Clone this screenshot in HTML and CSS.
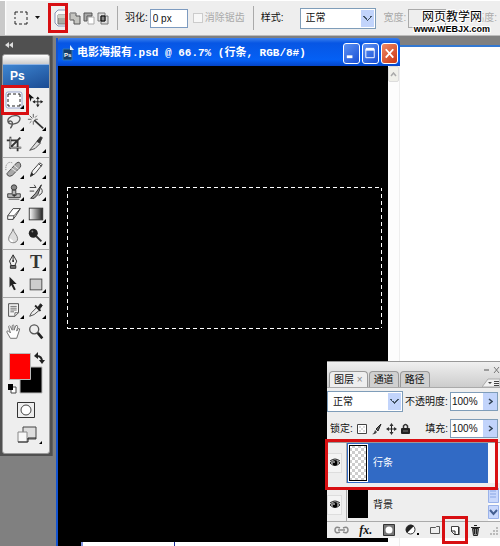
FILE: index.html
```html
<!DOCTYPE html>
<html lang="zh-CN">
<head>
<meta charset="utf-8">
<title>电影海报有.psd</title>
<link rel="stylesheet" href="styles.css">
</head>
<body>
<header class="options">
  <button class="icon-btn preset" aria-label="矩形选框工具"><svg width="14" height="14" viewBox="0 0 14 14"><path d="M1 4V1h3M6 1h3M11 1h2v3M13 6v3M13 11v2h-3M8 13H5M3 13H1v-3M1 8V6" fill="none" stroke="#222"/></svg></button>
  <button class="icon-btn drop" aria-label="预设"><svg width="5" height="4"><path d="M0 0h5L2.500 3z" fill="#111"/></svg></button>
  <div class="modes">
    <button class="icon-btn marked" aria-label="新选区"><svg width="13" height="18" viewBox="0 0 13 18"><path d="M13 1H4L1 4v10l3 3h9" fill="#fafafa" stroke="#8795b8"/><path d="M4 6h8v9H4z" fill="#a9ada5" stroke="#777"/><path d="M4 6h8v3H4z" fill="#ccd0c8"/></svg></button>
    <button class="icon-btn" aria-label="添加到选区"><svg width="12" height="13" viewBox="0 0 12 13"><path d="M1 1h6v3h4v8H5V8H1z" fill="#c4c4c0" stroke="#555"/><path d="M1 8V1h6" fill="none" stroke="#aaa"/></svg></button>
    <button class="icon-btn" aria-label="从选区减去"><svg width="12" height="13" viewBox="0 0 12 13"><path d="M5 5h6v7H5z" fill="#fff" stroke="#aaa"/><path d="M1 1h8v3H4v5H1z" fill="#aaa" stroke="#555"/></svg></button>
    <button class="icon-btn" aria-label="与选区交叉"><svg width="12" height="13" viewBox="0 0 12 13"><path d="M1 1h7v8H1zM4 4h7v8H4z" fill="#ddd" stroke="#777"/><path d="M4 4h4v5H4z" fill="#888" stroke="#000"/></svg></button>
  </div>
  <div class="field feather"><label for="feather">羽化:</label><input id="feather" class="box" value="0 px"></div>
  <label class="check"><input type="checkbox" disabled>消除锯齿</label>
  <div class="field style"><label for="style">样式:</label><select id="style" class="combo"><option>正常</option></select></div>
  <div class="field dim width"><label for="width">宽度:</label><input id="width" class="box" disabled></div>
  <div class="field dim height"><label for="height">高度:</label><input id="height" disabled></div>
  <div class="watermark"><span>网页教学网</span><b>www.WEBJX.com</b></div>
</header>

<main class="workspace">
  <aside class="toolbox">
    <button class="icon-btn collapse" aria-label="折叠"><svg width="8" height="6"><path d="M4 0v6L0 3zM8 0v6L4 3z" fill="#ddd"/></svg></button>
    <div class="tools">
      <div class="grip"></div>
      <div class="brand">Ps</div>
      <div class="group">
        <button class="tool marked more" aria-label="矩形选框"><svg viewBox="0 0 20 20"><rect x="2" y="2" width="16" height="16" rx="2" fill="#fff" stroke="#9aa6cf"/><path d="M4 7V4h3M9 4h3M14 4h2v3M16 9v3M16 14v2h-3M11 16H8M6 16H4v-2M4 12V9" fill="none" stroke="#222"/></svg></button>
        <button class="tool" aria-label="移动"><svg viewBox="0 0 20 20"><path d="M1 2l7 6H5l-1 4z" fill="#111"/><path d="M12 7v10M7 12h10" stroke="#222"/><path d="M12 6l2 3h-4zM12 18l2-3h-4zM6 12l3-2v4zM18 12l-3-2v4z" fill="#222"/></svg></button>
        <button class="tool more" aria-label="套索"><svg viewBox="0 0 20 20"><path d="M5 12C0 8 6 2 13 3c7 1 3 9-3 9-4 1-8-1-5-3 3-1 5 3 1 8" fill="none" stroke="#555" stroke-width="1.500"/></svg></button>
        <button class="tool more" aria-label="魔棒"><svg viewBox="0 0 20 20"><path d="M8 8l10 9" stroke="#333" stroke-width="2"/><path d="M7 1v4M7 9v4M1 7h4M3 3l3 3M11 3L9 5M3 11l2-2M9 7h3" stroke="#555"/></svg></button>
        <button class="tool" aria-label="裁剪"><svg viewBox="0 0 20 20"><path d="M6 2v12h12M2 6h12v12M5 15L17 3" fill="none" stroke="#333" stroke-width="2"/><path d="M6 3v11h12" fill="none" stroke="#aaa"/></svg></button>
        <button class="tool more" aria-label="切片"><svg viewBox="0 0 20 20"><path d="M3 17L12 6l3 3-6 6z" fill="#ddd" stroke="#444"/><path d="M11 7l4-5 2 1-3 6z" fill="#333" stroke="#333"/></svg></button>
      </div>
      <div class="group">
        <button class="tool more" aria-label="修复画笔"><svg viewBox="0 0 20 20"><path d="M3 13L13 2q3-2 4 1t0 4L8 16q-3 2-5 0t0-3z" fill="#aaa" stroke="#444"/><path d="M7 8l6 4M10 5l5 4" stroke="#eee"/><path d="M8 2Q3 0 1 6v5" fill="none" stroke="#777" stroke-dasharray="1 1"/></svg></button>
        <button class="tool more" aria-label="画笔"><svg viewBox="0 0 20 20"><path d="M4 17l2-6 8-9 3 2-8 10z" fill="#f6f6f6" stroke="#333"/><path d="M4 17l1-4 2 2zM13 3l3 3" fill="#111" stroke="#333"/></svg></button>
        <button class="tool more" aria-label="图章"><svg viewBox="0 0 20 20"><circle cx="10" cy="5" r="3" fill="#888" stroke="#333"/><path d="M8 8h4v4h5v4H3v-4h5z" fill="#bbb" stroke="#333"/><path d="M8 13h5l-3 2zM4 18h12" fill="#222" stroke="#444"/></svg></button>
        <button class="tool more" aria-label="历史画笔"><svg viewBox="0 0 20 20"><path d="M4 17l5-5 7-10-4 11-4 4z" fill="#999" stroke="#222"/><path d="M3 5h7l-2-3M3 9h5M13 14q6-3 3-8" fill="none" stroke="#333"/></svg></button>
        <button class="tool more" aria-label="橡皮擦"><svg viewBox="0 0 20 20"><path d="M3 12l6-8h8l-5 8-3 4H3z" fill="#fff" stroke="#333"/><path d="M3 12h7l7-8M10 12l-1 4" fill="none" stroke="#444"/></svg></button>
        <button class="tool more" aria-label="渐变"><svg viewBox="0 0 20 20"><defs><linearGradient id="g"><stop stop-color="#fff"/><stop offset="1" stop-color="#222"/></linearGradient></defs><rect x="2.500" y="3.500" width="15" height="13" fill="url(#g)" stroke="#333"/></svg></button>
        <button class="tool more" aria-label="模糊"><svg viewBox="0 0 20 20"><path d="M9 2c1 5 5 7 5 11 0 6-10 6-10 0 0-4 4-6 5-11z" fill="#ddd" stroke="#777"/><path d="M6 13q0 3 3 3" stroke="#fff" stroke-width="2" fill="none"/></svg></button>
        <button class="tool more" aria-label="减淡"><svg viewBox="0 0 20 20"><circle cx="7" cy="7" r="5" fill="#222"/><path d="M10 10l6 6" stroke="#333" stroke-width="2"/><circle cx="6" cy="5" r="1" fill="#888"/></svg></button>
      </div>
      <div class="group">
        <button class="tool more" aria-label="钢笔"><svg viewBox="0 0 20 20"><path d="M9 2l4 7-2 5H7L5 9z" fill="#eee" stroke="#222"/><path d="M9 3v6M6 14h6v3H6z" fill="#777" stroke="#222"/><circle cx="9" cy="9" r="1"/></svg></button>
        <button class="tool more letter" aria-label="文字">T</button>
        <button class="tool more" aria-label="路径选择"><svg viewBox="0 0 20 20"><path d="M5 2l8 8H9l3 6-2 1-3-6-2 3z" fill="#222"/></svg></button>
        <button class="tool more" aria-label="矩形"><svg viewBox="0 0 20 20"><rect x="3.500" y="4.500" width="13" height="12" fill="#ccc" stroke="#444"/></svg></button>
      </div>
      <div class="group">
        <button class="tool more" aria-label="注释"><svg viewBox="0 0 20 20"><path d="M4 3h11v10l-4 4H4z" fill="#f5f5f5" stroke="#444"/><path d="M6 6h7M6 8h7M6 10h7M6 12h4M15 13h-4v4" fill="none" stroke="#666"/></svg></button>
        <button class="tool more" aria-label="吸管"><svg viewBox="0 0 20 20"><path d="M3 17l2-4 6-6 3 3-6 5z" fill="#eee" stroke="#444"/><path d="M9 5l6 6" stroke="#222" stroke-width="2"/><path d="M12 7l3-4 2 2-3 4z" fill="#222" stroke="#222"/></svg></button>
        <button class="tool" aria-label="抓手"><svg viewBox="0 0 20 20"><path d="M6 17L2 10q0-2 2-1l2 2-2-7q1-2 2 0l2 4V3q1-2 2 0v5l2-5q2-1 2 1l-1 5 2-3q2 0 1 2l-3 9z" fill="#fff" stroke="#666"/></svg></button>
        <button class="tool" aria-label="缩放"><svg viewBox="0 0 20 20"><circle cx="8" cy="7" r="5" fill="#eee" stroke="#555" stroke-width="1.500"/><path d="M12 11l5 6" stroke="#222" stroke-width="3"/></svg></button>
      </div>
      <button class="icon-btn colors" aria-label="前景色和背景色"><svg width="38" height="44" viewBox="0 0 38 44"><path d="M13 16h22v26H13z" fill="#000" stroke="#bbb"/><path d="M2.500 2.500h21v26h-21z" fill="red" stroke="#b9b9b9"/><path d="M30 5q5 0 5 6" fill="none" stroke="#222" stroke-width="2"/><path d="M27 5l4-4v7zM32 9h6l-3 4z" fill="#222"/><path d="M4 36h5v6H4z" fill="#fff" stroke="#444"/><path d="M1 33h5v6H1z"/></svg></button>
      <button class="icon-btn mask" aria-label="快速蒙版"><svg width="18" height="16" viewBox="0 0 18 16"><path d="M.5.5h17v15H.5z" fill="#eee" stroke="#333"/><circle cx="9" cy="8" r="5" fill="#fff" stroke="#444"/></svg></button>
      <button class="icon-btn screen" aria-label="屏幕模式"><svg width="26" height="20" viewBox="0 0 26 20"><path d="M6 1h13v12H6z" fill="#ddd" stroke="#444"/><path d="M1 6h9v10H1z" fill="#f8f8f8" stroke="#888"/><path d="M1 16h10v-4h8" fill="none" stroke="#222"/><path d="M25 15v3h-3z"/></svg></button>
    </div>
  </aside>

  <section class="document">
    <div class="titlebar">
      <svg class="file" width="13" height="17" viewBox="0 0 13 17"><path d="M1 4h9v11H1z" fill="#173d68" stroke="#2d76b7"/><path d="M8 0l4 5H8z" fill="#dcecff"/><text x="2" y="12" class="file-text">Ps</text></svg>
      <h1>电影海报有.psd @ 66.7% (行条, RGB/8#)</h1>
      <button class="win" aria-label="最小化"><svg viewBox="0 0 16 18"><path d="M3 13h6" stroke="#fff" stroke-width="3"/></svg></button>
      <button class="win" aria-label="最大化"><svg viewBox="0 0 16 18"><path d="M3 5h9v9H3z" fill="none" stroke="#fff"/><path d="M3 5h9" stroke="#fff" stroke-width="3"/></svg></button>
      <button class="win close" aria-label="关闭"><svg viewBox="0 0 16 18"><path d="M4 5l8 9M12 5l-8 9" stroke="#fff" stroke-width="2"/></svg></button>
    </div>
    <div class="view">
      <div class="canvas"><div class="selection"></div></div>
      <div class="scroll"><button class="icon-btn" aria-label="向上滚动"><svg width="7" height="5"><path d="M1 4l2.500-3L6 4" fill="none" stroke="#aaa" stroke-width="1.500"/></svg></button></div>
      <div class="edge"></div>
    </div>
  </section>
  <div class="backdrop"></div>
</main>

<section class="palette">
  <div class="tabs">
    <button class="tab on">图层 <span>×</span></button><button class="tab">通道</button><button class="tab">路径</button>
    <div class="corner"><svg width="18" height="25" viewBox="0 0 18 25"><path d="M2 8h5" stroke="#555"/><path d="M12 5l5 6M17 5l-5 6" stroke="#777"/><path d="M0 25l6-8h12v8z" fill="#f2f2f2" stroke="#aaa"/><path d="M6 20h4l-2 2zM12 19h5v1h-5zM12 21h5v1h-5zM12 23h5v1h-5z" fill="#444"/></svg></div>
  </div>
  <div class="row">
    <select class="combo blend" aria-label="混合模式"><option>正常</option></select>
    <label for="opacity">不透明度:</label><span class="spin"><input id="opacity" value="100%"><button aria-label="调整不透明度"><svg width="5" height="7"><path d="M1 1l3 2.500L1 6" fill="none" stroke="#345" stroke-width="1.500"/></svg></button></span>
  </div>
  <div class="row lock">
    <span>锁定:</span>
    <div class="locks">
      <button class="icon-btn" aria-label="锁定透明像素"><svg width="10" height="12"><path d="M.5 1.500h9v9h-9z" fill="#fff" stroke="#444"/><path d="M2 3h2v2H2zM6 3h2v2H6zM4 5h2v2H4zM2 7h2v2H2zM6 7h2v2H6z" fill="#ddd"/></svg></button>
      <button class="icon-btn" aria-label="锁定图像像素"><svg width="11" height="12"><path d="M10 1L5 6l2 2z" fill="#666" stroke="#222"/><path d="M1 11q2 0 3-4l2 2q-2 3-5 2z" fill="#444"/></svg></button>
      <button class="icon-btn" aria-label="锁定位置"><svg width="11" height="12" viewBox="0 0 11 12"><path d="M5.500 1v10M1 6h9" stroke="#222"/><path d="M5.500 0l2 3h-4zM5.500 12l2-3h-4zM0 6l3-2v4zM11 6L8 4v4z" fill="#333"/></svg></button>
      <button class="icon-btn" aria-label="全部锁定"><svg width="9" height="12"><path d="M2.500 6V3q2-3 4 0v3" fill="none" stroke="#333" stroke-width="1.500"/><rect y="5" width="9" height="6" rx="1" fill="#222"/><path d="M2 8h5" stroke="#777"/></svg></button>
    </div>
    <label for="fill">填充:</label><span class="spin"><input id="fill" value="100%"><button aria-label="调整填充"><svg width="5" height="7"><path d="M1 1l3 2.500L1 6" fill="none" stroke="#345" stroke-width="1.500"/></svg></button></span>
  </div>
  <div class="layers">
    <div class="layer selected">
      <button class="eye" aria-label="显示"><svg width="12" height="10" viewBox="0 0 12 10"><path d="M1 5q5-5 10 0-5 5-10 0zM1 3q5-4 10 0" fill="#ddd" stroke="#222"/><circle cx="6" cy="5" r="2.500"/><circle cx="5" cy="4" r="1" fill="#aaa"/></svg></button>
      <div class="name"><i class="thumb clear"></i>行条</div><div class="track"></div>
    </div>
    <div class="layer">
      <button class="eye" aria-label="显示"><svg width="12" height="10" viewBox="0 0 12 10"><path d="M1 5q5-5 10 0-5 5-10 0zM1 3q5-4 10 0" fill="#ddd" stroke="#222"/><circle cx="6" cy="5" r="2.500"/><circle cx="5" cy="4" r="1" fill="#aaa"/></svg></button>
      <div class="name"><i class="thumb"></i>背景</div>
      <div class="track bars"><svg width="11" height="31" viewBox="0 0 11 31"><path d="M.5 0v14.500h10V0" fill="#c9d8fc" stroke="#9ab2e9"/><path d="M2 3h6M2 6h6M2 9h6" stroke="#88a5e5"/><path d="M.5 17.500h10v13H.5z" fill="#c9d8fc" stroke="#9ab2e9"/><path d="M2 22l3.500 4L9 22" fill="none" stroke="#445f91" stroke-width="2"/></svg></div>
    </div>
  </div>
  <footer class="actions">
    <button class="icon-btn" aria-label="链接图层"><svg width="15" height="10"><path d="M6 3q-5-2-5 2t5 2M9 3q5-2 5 2T9 7M4 5h7" fill="none" stroke="#888" stroke-width="1.500"/></svg></button>
    <button class="icon-btn fx" aria-label="图层样式">fx.</button>
    <button class="icon-btn" aria-label="添加蒙版"><svg width="12" height="12"><path d="M.5.5h11v11H.5z" fill="#777" stroke="#333"/><circle cx="6" cy="6" r="3.500" fill="#fff"/></svg></button>
    <button class="icon-btn" aria-label="调整图层"><svg width="15" height="12"><circle cx="5.500" cy="5.500" r="4.500" fill="#fff" stroke="#333"/><path d="M2 9A5 5 0 0 1 9 2z" fill="#222"/><path d="M12 9h2v2h-2z"/></svg></button>
    <button class="icon-btn" aria-label="新建组"><svg width="10" height="10"><path d="M.5 8.500v-6h5l1-1h3v7z" fill="#eee" stroke="#555"/></svg></button>
    <button class="icon-btn marked" aria-label="新建图层"><svg width="10" height="10"><path d="M1.500 1.500h7v8h-4l-3-3z" fill="#fff" stroke="#444"/><path d="M1 6h4v4M9 2v8H4" fill="none" stroke="#222"/></svg></button>
    <button class="icon-btn" aria-label="删除图层"><svg width="9" height="12"><path d="M1.500 4.500h6l-1 7h-4z" fill="#888" stroke="#222"/><path d="M0 3.500h9M3 1.500h3M3.500 5v5M5.500 5v5" stroke="#222"/></svg></button>
    <svg width="9" height="9"><path d="M6 1h2v2H6zM3 4h2v2H3zM6 4h2v2H6zM0 7h2v2H0zM3 7h2v2H3zM6 7h2v2H6z" fill="#bbb"/></svg>
  </footer>
</section>
</body>
</html>
```

FILE: styles.css
```css
* { box-sizing: border-box; }

body {
  margin: 0;
  min-height: 100vh;
  display: flex;
  flex-direction: column;
  position: relative;
  overflow: hidden;
  background: #808080;
  color: #111;
  font: 10px/14px "Liberation Sans", "Noto Sans CJK SC", sans-serif;
}

button, input, select { font: inherit; color: inherit; margin: 0; padding: 0; }
input { min-width: 0; }
svg { display: block; flex: none; }

.icon-btn {
  display: flex;
  align-items: center;
  justify-content: center;
  flex: none;
  border: 0;
  background: none;
}

.marked { position: relative; }
.marked::after, .layers .selected::after {
  content: "";
  position: absolute;
  z-index: 3;
  border: 3px solid #d80f12;
  pointer-events: none;
}

/* Options bar */
.options {
  position: relative;
  display: flex;
  align-items: center;
  height: 36px;
  padding-left: 14px;
  border-top: 1px solid #fff;
  border-bottom: 1px solid #bbb;
  background: linear-gradient(90deg, #c9c9c9 5px, #fff 5px, #eee 7px);
  white-space: nowrap;
}
.drop { margin-left: 7px; }
.modes { display: flex; align-items: center; gap: 2px; margin-left: 13px; padding-right: 8px; border-right: 1px solid #aaa; }
.modes .icon-btn { height: 24px; }
.modes .marked { width: 14px; }
.modes .marked::after { inset: -3px -1px -3px -5px; }
.field { display: flex; align-items: center; gap: 2px; }
.feather { margin-left: 7px; }
.box { width: 38px; height: 19px; padding: 0 2px; border: 1px solid #7d9bc0; background: #fff; }
.check { display: flex; align-items: center; gap: 2px; margin-left: 5px; color: #aaa; }
.check input { appearance: none; width: 10px; height: 10px; border: 1px solid #ccc; background: #f7f7f7; }
.style { margin-left: 8px; padding-left: 7px; border-left: 1px solid #aaa; height: 24px; gap: 16px; }
.combo {
  appearance: none;
  width: 76px;
  height: 21px;
  padding: 0 5px;
  border: 1px solid #7f9db9;
  border-radius: 0;
  background:
    linear-gradient(45deg, transparent 46%, #456 46% 60%, transparent 60%) right 7px center / 5px 5px no-repeat,
    linear-gradient(-45deg, transparent 46%, #456 46% 60%, transparent 60%) right 3px center / 5px 5px no-repeat,
    linear-gradient(#c2d4fb, #c2d4fb) right 1px center / 13px 17px no-repeat,
    #fff;
}
.dim { color: #aaa; }
.width { margin-left: 8px; }
.width .box { background: #eee; border-color: #aaa; }
.height { margin-left: 28px; gap: 0; }
.height input { width: 1px; border: 0; background: none; }
.watermark {
  position: absolute;
  right: 10px;
  top: 9px;
  display: grid;
  justify-items: center;
  color: #000;
  font-size: 12px;
  line-height: 14px;
  text-shadow: 1px 0 #fff, -1px 0 #fff, 0 1px #fff, 0 -1px #fff, 1px 1px #fff, -1px -1px #fff, 1px -1px #fff, -1px 1px #fff;
}
.watermark b { font-size: 9px; line-height: 10px; }

/* Workspace */
.workspace { flex: 1; display: grid; grid-template-columns: 56px minmax(0, 344fr) minmax(0, 100fr); }

.toolbox { align-self: start; width: 53px; border-right: 1px solid #606060; background: #505050; padding: 0 2px 2px 2px; }
.collapse { width: 14px; height: 18px; }
.tools { border: 1px solid #999; border-radius: 3px; background: #eee; padding-bottom: 7px; }
.grip { height: 9px; border-radius: 3px 3px 0 0; background: linear-gradient(#fff, #ccc); }
.brand {
  height: 24px;
  padding-left: 7px;
  border-top: 1px solid #8fb4e4;
  background: linear-gradient(160deg, #3e86d2, #1b4b93);
  color: #fff;
  font: bold 12px/23px "Liberation Sans", sans-serif;
}
.group {
  display: grid;
  grid-template-columns: repeat(2, 22px);
  grid-auto-rows: 22px;
  padding: 1px 0 2px;
  border-bottom: 1px solid #aaa;
}
.group:last-of-type { border-bottom: 0; }
.tool { position: relative; display: grid; place-items: center; border: 0; background: none; }
.tool svg { width: 18px; height: 18px; }
.tool.marked svg { width: 20px; height: 20px; }
.more::before {
  content: "";
  position: absolute;
  right: 1px;
  bottom: 2px;
  border: 2px solid #000;
  border-top-color: transparent;
  border-left-color: transparent;
}
.tool.marked::after { inset: -4px -4px -4px -2px; }
.letter { font: bold 18px/20px "Liberation Serif", serif; color: #333; }
.colors { margin: 6px 0 0 4px; }
.mask { margin: 7px 0 0 14px; }
.screen { margin: 8px 0 0 14px; }

.document { display: flex; flex-direction: column; margin-top: 2px; border-left: 2px solid #1554cf; }
.titlebar {
  display: flex;
  align-items: center;
  height: 28px;
  padding: 2px 2px 0 4px;
  gap: 2px;
  border-radius: 4px 4px 0 0;
  background: linear-gradient(#3a80ee, #0756e4 5px, #0460f5 22px, #0545c8);
}
.file-text { font: bold 6px "Liberation Sans", sans-serif; fill: #fff; }
.titlebar h1 {
  flex: 1;
  margin: 0;
  overflow: hidden;
  color: #fff;
  white-space: nowrap;
  font: bold 11px/18px "Liberation Mono", "Noto Sans CJK SC", monospace;
}
.win { width: 17px; height: 21px; border: 1px solid #fff; border-radius: 3px; background: linear-gradient(135deg, #5b91f3, #1a4fd5); }
.win svg { width: 15px; height: 18px; }
.close { background: linear-gradient(135deg, #ee8a67, #cb3412); }
.view { flex: 1; display: grid; grid-template-columns: minmax(0, 1fr) 12px; grid-template-rows: 1fr 4px; }
.canvas { background: #000; }
.selection {
  margin: 121px 6px 0 9px;
  height: 142px;
  background:
    repeating-linear-gradient(90deg, #fff 0 4px, #000 4px 7px) top / 100% 1px no-repeat,
    repeating-linear-gradient(90deg, #fff 0 4px, #000 4px 7px) bottom / 100% 1px no-repeat,
    repeating-linear-gradient(#fff 0 4px, #000 4px 7px) left / 1px 100% no-repeat,
    repeating-linear-gradient(#fff 0 4px, #000 4px 7px) right / 1px 100% no-repeat;
}
.scroll { grid-row: span 2; background: #fdfdfd; border-right: 1px solid #eee; }
.scroll .icon-btn { width: 11px; height: 16px; border: 1px solid #ddd; border-radius: 2px; background: #f0f0ea; }
.edge { background: linear-gradient(90deg, #000 23px, #8296df 23px 25px, #fff 25px 116px, #20309c 116px 117px, #fff 117px); }
.backdrop { margin-top: 9px; border-top: 2px solid #3278d2; background: #fff; }

/* Layers palette */
.palette { position: absolute; right: 0; top: 361px; width: 173px; background: #eee; white-space: nowrap; }
.tabs { display: flex; align-items: flex-end; gap: 1px; height: 27px; padding-left: 2px; border-top: 1px solid #999; border-bottom: 1px solid #aaa; background: linear-gradient(#f0f0f0, #ccc); }
.tab { height: 16px; padding: 0 4px; border: 1px solid #999; border-bottom: 0; border-radius: 4px 4px 0 0; background: #d0d0d0; line-height: 14px; }
.tab.on { background: #eee; }
.tab span { color: #888; }
.corner { margin-left: auto; }
.row { display: flex; align-items: center; gap: 2px; height: 27px; padding: 0 2px 0 0; }
.row .spin { margin-left: auto; }
.blend { width: 76px; }
.spin { display: flex; width: 48px; height: 19px; border: 1px solid #7f9db9; background: #fff; }
.spin input { flex: 1; width: 10px; padding-left: 1px; border: 0; background: none; }
.spin button { display: grid; place-items: center; width: 14px; border: 0; background: #c2d4fb; }
.lock { padding-left: 3px; }
.locks { display: flex; align-items: center; gap: 4px; margin-left: 2px; }
.lock label { margin-left: auto; }
.lock .spin { margin-left: 0; }
.layers { border-top: 1px solid #999; }
.layer { position: relative; display: grid; grid-template-columns: 19px 1fr 12px; height: 33px; }
.layer.selected { height: 45px; padding-bottom: 5px; }
.layers .selected::after { inset: -4px 2px -2px -2px; }
.eye { display: grid; place-items: center; align-self: center; height: 20px; width: 15px; border: 1px solid #ddd; background: #f4f4f4; }
.name { display: flex; align-items: center; gap: 5px; padding-left: 1px; border-left: 1px solid #aaa; }
.selected .name { background: #316ac5; color: #fff; }
.thumb { align-self: stretch; width: 20px; margin: 2px 0 3px; background: #000; }
.thumb.clear { margin: 1px 0; border: 1px solid #fff; outline: 1px solid #000; outline-offset: -2px; background: repeating-conic-gradient(#ccc 0 25%, #fff 0 50%) 0 0 / 6px 6px; }
.track { background: #fafafa; }
.actions { display: flex; align-items: center; justify-content: space-between; height: 17px; padding: 0 8px 0 7px; border-top: 1px solid #aaa; }
.actions > svg { margin-right: -7px; }
.fx { font: italic bold 12px/14px "Liberation Serif", serif; }
.actions .marked::after { inset: -9px -8px; }
```
